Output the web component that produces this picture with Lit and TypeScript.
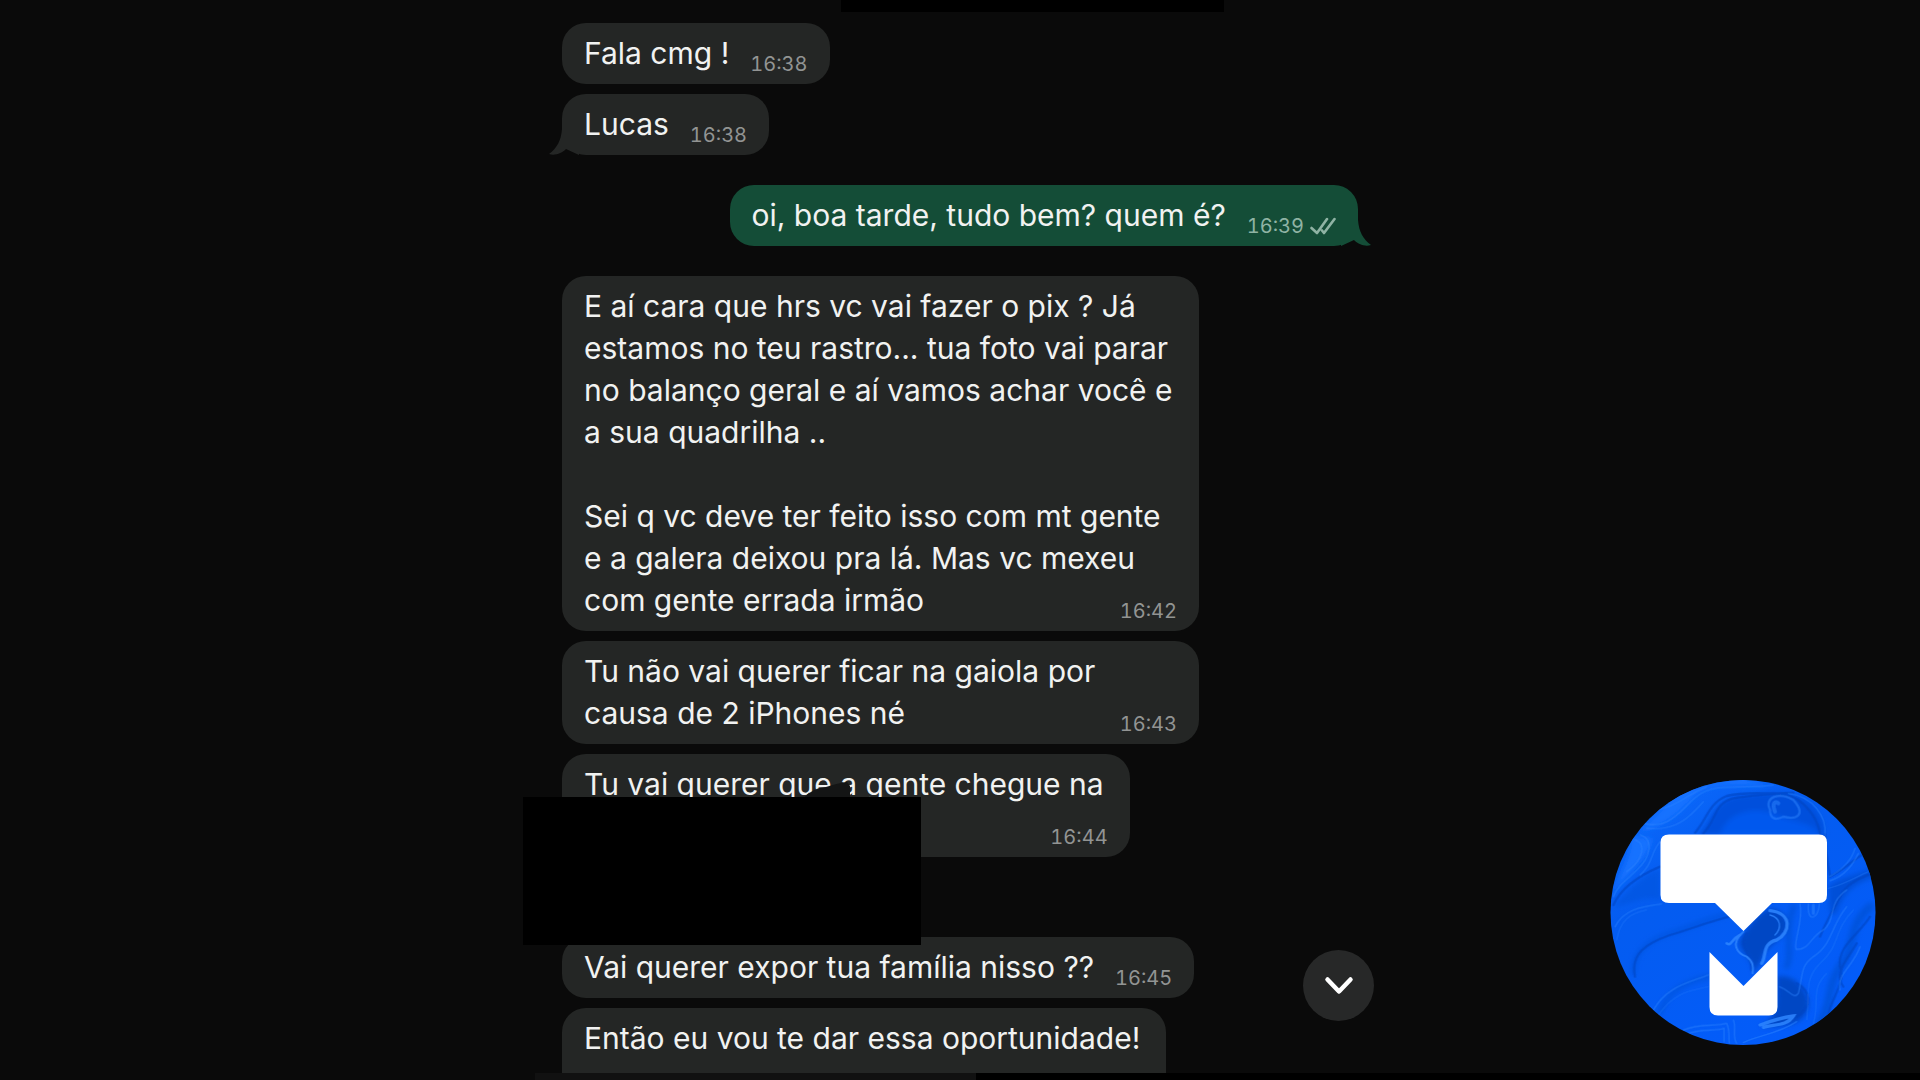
import { LitElement, html, svg, css, nothing } from "lit";
import { customElement, property } from "lit/decorators.js";

interface Message {
  lines: string[];
  time?: string;
  sent?: boolean;
  tail?: boolean;
  wide?: boolean;
  gap?: "near" | "turn" | "far";
}

const MESSAGES: Message[] = [
  { lines: ["Fala cmg !"], time: "16:38" },
  { lines: ["Lucas"], time: "16:38", tail: true, gap: "near" },
  { lines: ["oi, boa tarde, tudo bem? quem é?"], time: "16:39", sent: true, tail: true, gap: "turn" },
  {
    lines: [
      "E aí cara que hrs vc vai fazer o pix ? Já",
      "estamos no teu rastro... tua foto vai parar",
      "no balanço geral e aí vamos achar você e",
      "a sua quadrilha ..",
      "",
      "Sei q vc deve ter feito isso com mt gente",
      "e a galera deixou pra lá. Mas vc mexeu",
      "com gente errada irmão",
    ],
    time: "16:42",
    wide: true,
    gap: "turn",
  },
  {
    lines: ["Tu não vai querer ficar na gaiola por", "causa de 2 iPhones né"],
    time: "16:43",
    wide: true,
    gap: "near",
  },
  { lines: ["Tu vai querer que a gente chegue na", ""], time: "16:44", gap: "near" },
  { lines: ["Vai querer expor tua família nisso ??"], time: "16:45", gap: "far" },
  { lines: ["Então eu vou te dar essa oportunidade!", ""], gap: "near" },
];

@customElement("chat-bubble")
export class ChatBubble extends LitElement {
  @property({ attribute: false }) message!: Message;

  static styles = css`
    :host {
      display: flex;
    }
    .bubble {
      position: relative;
      box-sizing: border-box;
      padding: 9px 22px 10px;
      border-radius: 24px;
      background: #242625;
      color: #f1f2f1;
      font-size: 30px;
      line-height: 42px;
    }
    .sent {
      margin-left: auto;
      background: #144d37;
    }
    .wide {
      width: 637px;
    }
    .text {
      margin: 0;
      white-space: nowrap;
    }
    .line {
      display: flex;
      justify-content: space-between;
      gap: 21px;
      min-height: 42px;
    }
    .full {
      padding-right: 4px;
    }
    .meta {
      display: flex;
      align-items: center;
      align-self: end;
      gap: 6px;
      color: #929493;
      font-size: 20px;
      font-variant-numeric: tabular-nums;
      line-height: 20px;
    }
    .sent .meta {
      color: #8fb3a4;
    }
    .checks {
      width: 26px;
      height: 18px;
    }
    .tail {
      position: absolute;
      bottom: 0;
      left: -13px;
      width: 30px;
      height: 36px;
      fill: #242625;
    }
    .sent .tail {
      left: auto;
      right: -13px;
      transform: scaleX(-1);
      fill: #144d37;
    }
  `;

  render() {
    const { lines, time, sent, tail, wide } = this.message;
    const last = lines.length - 1;
    return html`
      <div class="bubble ${sent ? "sent" : ""} ${wide ? "wide" : ""}">
        ${tail
          ? html`<svg class="tail" viewBox="0 0 30 36" aria-hidden="true">
              <path d="M13 0V10C12 22 8 29 0 35C6 37 13 34 17 30L30 36V0Z" />
            </svg>`
          : nothing}
        <p class="text">
          ${lines.map(
            (line, i) => html`<span class="line ${i < last ? "full" : ""}"
              ><span>${line}</span>${i === last && time ? this.meta(time, !!sent) : nothing}</span
            >`
          )}
        </p>
      </div>
    `;
  }

  private meta(time: string, sent: boolean) {
    return html`<span class="meta">
      <time>${time}</time>
      ${sent
        ? html`<svg
            class="checks"
            viewBox="0 0 26 18"
            fill="none"
            stroke="currentColor"
            stroke-width="2.6"
            stroke-linecap="round"
            stroke-linejoin="round"
            role="img"
            aria-label="Entregue"
          >
            <path d="M1.500 11L7 16L17 2M12 13.500L14 16L24.500 2" />
          </svg>`
        : nothing}
    </span>`;
  }
}

@customElement("brand-badge")
export class BrandBadge extends LitElement {
  static styles = css`
    :host {
      display: block;
    }
    .logo {
      display: block;
      width: 100%;
    }
  `;

  render() {
    return html`
      <svg class="logo" viewBox="0 0 266 266" role="img" aria-label="Logo">
        <defs>
          <clipPath id="disc"><circle cx="133" cy="132.500" r="132.500" /></clipPath>
          <linearGradient id="base" x1="0" y1="0" x2="0.6" y2="1">
            <stop offset="0" stop-color="#0f6dff" />
            <stop offset="0.4" stop-color="#045cf0" />
            <stop offset="1" stop-color="#035cfa" />
          </linearGradient>
          <filter id="soft" x="-20%" y="-20%" width="140%" height="140%"><feGaussianBlur stdDeviation="8" /></filter>
          <filter id="fine" x="-20%" y="-20%" width="140%" height="140%"><feGaussianBlur stdDeviation="2" /></filter>
        </defs>
        <g clip-path="url(#disc)">
          <rect width="266" height="266" fill="url(#base)" />
          ${this.marble()}
        </g>
        <path
          fill="#fff"
          d="M59 54.500H209Q217 54.500 217 62.500V115Q217 123 209 123H162L133.500 151L105 123H59Q50.500 123 50.500 115V62.500Q50.500 54.500 59 54.500Z
             M99.500 172L133.500 206L167.500 172V227Q167.500 235.500 159 235.500H108Q99.500 235.500 99.500 227Z"
        />
      </svg>
    `;
  }

  /* Swirls are drawn on a 3x canvas, then scaled down onto the disc. */
  private marble() {
    return svg`<g transform="translate(-30 -20) scale(0.33333)" fill="none" stroke-linecap="round">
      <g filter="url(#soft)">
        <path fill="#0250dc" d="M350 225C400 190 390 110 500 105C570 100 620 80 690 130C740 180 730 215 735 225Z" />
        <path fill="#0558ee" d="M420 225C440 160 520 130 600 170C660 190 700 190 720 225Z" />
        <path fill="#1472ff" d="M180 215C260 200 320 140 350 100C400 60 500 85 560 75L480 50L300 90Z" />
        <path fill="#1472ff" d="M95 400C130 330 160 260 150 230L215 235C215 280 150 340 95 400Z" />
        <path fill="#0246c4" d="M500 510C540 450 580 425 615 470C640 540 560 540 545 600L520 640C520 590 470 570 480 540Z" />
        <path fill="#0246c4" d="M592 650C650 640 690 700 685 740C670 800 610 800 540 800C600 770 590 720 592 650Z" />
        <path fill="#0350d8" d="M745 380C780 350 820 350 885 320L888 350C820 370 790 400 770 460C740 480 750 420 745 380Z" />
        <path fill="#0351dc" d="M100 440C150 380 200 340 240 325V420C200 400 140 440 100 440Z" opacity=".6" />
        <path stroke="#0352dc" stroke-width="24" d="M870 440C800 500 830 560 780 620C740 680 760 720 720 790" />
        <path stroke="#0352dc" stroke-width="16" d="M640 440C610 520 640 580 620 620" />
        <path stroke="#0655e2" stroke-width="14" d="M160 640C160 560 230 530 300 510C360 490 400 470 440 465" />
        <path stroke="#0454e0" stroke-width="14" d="M240 760C260 690 330 660 390 650" />
      </g>
      <g filter="url(#fine)">
        <g stroke="#0247c4" stroke-width="7" opacity=".6">
          <path d="M370 220C410 180 400 130 460 115C540 105 610 90 655 120C700 155 715 190 720 222" />
          <path d="M345 218C380 180 385 130 440 108C500 92 560 105 640 98" />
          <path d="M100 435C120 390 170 350 240 320" />
          <path d="M165 650C150 580 200 550 270 525C340 505 400 480 450 470" />
          <path d="M870 342C830 360 800 370 780 410C760 450 740 480 720 530" />
          <path d="M735 222C735 290 745 310 750 350C790 330 820 300 845 285" />
          <path d="M500 520C470 560 520 580 515 630" />
          <path d="M740 800C740 720 800 680 780 620C770 560 840 520 870 470" />
          <path d="M650 770C700 740 690 690 650 670" />
          <path d="M790 680C760 640 800 600 830 550" />
        </g>
        <g stroke="#2f86ff" stroke-width="4" opacity=".5">
          <path d="M190 190C270 210 300 150 350 110C400 65 500 90 580 75" />
          <path d="M200 205C290 215 330 170 370 125" />
          <path d="M230 150C290 140 320 105 380 80" />
          <path d="M180 225C220 235 215 290 170 330C140 360 110 380 100 410" />
          <path d="M165 240C200 250 190 300 140 335" />
          <path d="M240 245C210 280 220 310 180 345" />
          <path d="M105 500C130 450 180 440 245 432" />
          <path d="M110 540C120 480 150 460 200 450" opacity=".6" />
          <path d="M220 750C260 680 320 670 385 645" />
          <path d="M235 765C280 700 330 690 385 680" opacity=".5" />
          <path d="M310 810C360 790 400 800 440 790C450 810 445 830 448 850" />
          <path d="M325 820C370 805 400 815 432 805V845" />
          <path d="M460 780C470 800 455 830 470 850" />
          <path d="M570 150C550 110 600 95 640 120C680 165 650 180 610 170C580 185 570 170 570 150Z" stroke-width="7" />
          <path d="M585 155C575 130 585 120 595 130" stroke-width="12" />
          <path d="M625 100C700 110 740 170 735 225" />
          <path d="M750 362C800 345 820 310 835 280" />
          <path d="M748 350C785 330 815 300 825 265" />
          <path d="M745 385C790 375 830 350 865 335" opacity=".6" />
          <path d="M685 432C680 490 715 480 718 432" />
          <path d="M700 435V460" stroke-width="9" />
          <path d="M660 432C670 490 640 540 648 568C690 570 690 530 730 510C770 480 740 430 800 390" />
          <path d="M598 680C630 690 640 720 655 700C670 640 660 620 700 590C760 550 750 500 800 440" />
          <path d="M680 780C690 700 670 660 720 610C780 560 760 510 820 450" opacity=".6" />
          <path d="M780 690C770 640 820 620 840 560" />
          <path d="M700 790C720 720 690 690 740 640" opacity=".6" />
          <path d="M490 848C530 825 590 825 650 785" />
        </g>
        <g stroke="#2f86ff" opacity=".85">
          <path d="M570 452C640 460 630 520 590 540C545 550 560 590 545 610" stroke-width="10" />
          <path d="M570 465C605 475 605 505 585 525" stroke-width="4" />
          <path d="M490 515C450 550 470 580 500 590C520 605 520 620 518 640" stroke-width="6" />
          <path d="M480 525C450 540 455 560 440 550" stroke-width="8" />
          <path d="M540 795C580 780 610 772 640 768C620 800 580 792 550 802" stroke-width="10" />
        </g>
      </g>
    </g>`;
  }
}

@customElement("app-root")
export class AppRoot extends LitElement {
  static styles = css`
    :host {
      display: block;
      position: relative;
      height: 100vh;
      overflow: hidden;
      background: #0a0a0a;
      font-family: Inter, "Liberation Sans", sans-serif;
    }
    .chat {
      position: relative;
      box-sizing: border-box;
      max-width: 796px;
      height: 100%;
      margin: 0 auto;
      padding-top: 23px;
    }
    .list {
      margin: 0;
      padding: 0;
      list-style: none;
    }
    .near {
      margin-top: 10px;
    }
    .turn {
      margin-top: 30px;
    }
    .far {
      margin-top: 80px;
    }
    .cover {
      position: absolute;
      background: #000;
    }
    .cover-name {
      top: 0;
      left: 279px;
      width: 383px;
      height: 12px;
    }
    .cover-address {
      top: 797px;
      left: -39px;
      width: 398px;
      height: 148px;
    }
    .smudge {
      position: absolute;
      top: 782px;
      left: 242px;
      width: 46px;
      height: 16px;
      fill: #141515;
    }
    .edge {
      right: 0;
      bottom: 0;
      left: calc(50% + 16px);
      height: 7px;
    }
    .composer {
      position: absolute;
      bottom: 0;
      left: -27px;
      width: 441px;
      height: 7px;
      background: #111;
    }
    .down {
      position: absolute;
      right: -16px;
      bottom: 59px;
      display: grid;
      place-items: center;
      width: 71px;
      height: 71px;
      padding: 0;
      border: 0;
      border-radius: 50%;
      background: #272828;
      color: #fff;
    }
    .chevron {
      width: 30px;
      height: 20px;
    }
    .badge {
      position: absolute;
      right: 44px;
      bottom: 34px;
      width: 266px;
    }
  `;

  render() {
    return html`
      <main class="chat">
        <ul class="list">
          ${MESSAGES.map((m) => html`<li class=${m.gap ?? ""}><chat-bubble .message=${m}></chat-bubble></li>`)}
        </ul>
        <svg class="smudge" viewBox="0 0 46 16" aria-hidden="true"><path d="M0 16Q8 6 22 5Q34 1 43 0L46 4V16Z" /></svg>
        <div class="cover cover-name"></div>
        <div class="cover cover-address"></div>
        <div class="composer"></div>
        <button class="down" type="button" aria-label="Ir para o fim">
          <svg
            class="chevron"
            viewBox="0 0 30 20"
            fill="none"
            stroke="currentColor"
            stroke-width="4.500"
            stroke-linecap="round"
            stroke-linejoin="round"
          >
            <path d="M3.500 3.500L15 15.500L26.500 3.500" />
          </svg>
        </button>
      </main>
      <div class="cover edge"></div>
      <brand-badge class="badge"></brand-badge>
    `;
  }
}
